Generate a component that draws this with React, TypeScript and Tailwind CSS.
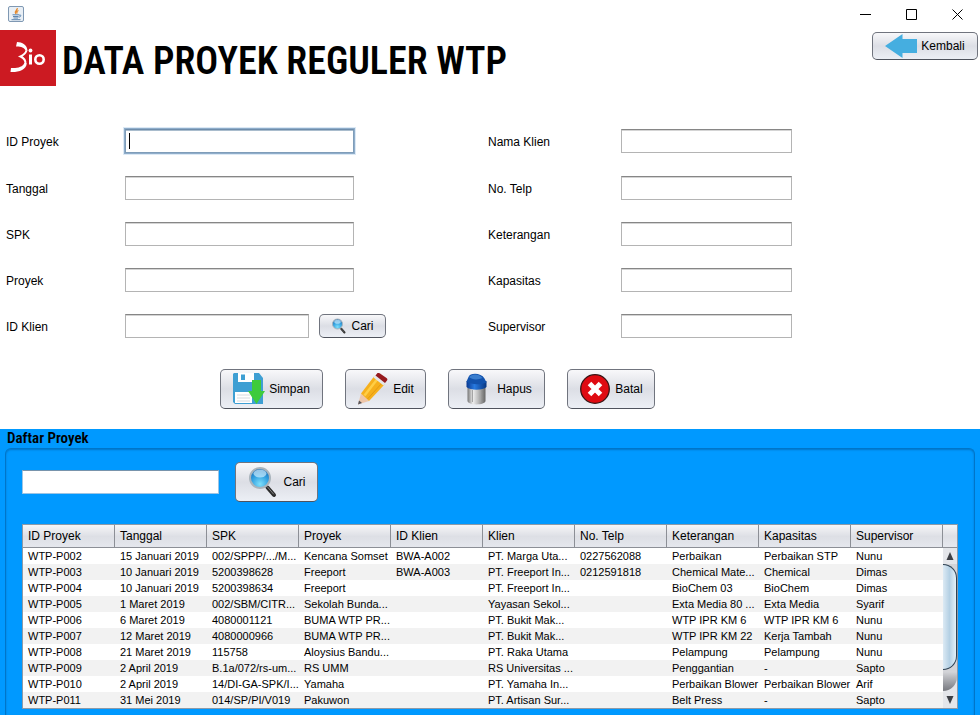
import type { ReactNode } from "react";

const buttonStyle =
  "flex shrink-0 items-center rounded-[5px] border border-[#70747e] border-b-[#4f535d] bg-linear-to-b from-[#f8f8fa] via-[#dcdee5] to-[#eceff5] text-xs text-black";

const fieldStyle =
  "h-6 border border-[#b4b4b4] border-t-[#868686] bg-white px-1 text-xs text-black outline-none shadow-[inset_0_1px_0_#d4d4d4] focus:border-[#7f9db9] focus:border-t-[#6f8dab] focus:shadow-[inset_0_1px_0_#a9bccd,0_0_0_1px_#8fadca,0_0_0_2px_#dce9f5]";

function JavaIcon() {
  return (
    <svg width="16" height="16" viewBox="0 0 16 16" fill="none" aria-hidden="true">
      <rect x=".5" y=".5" width="15" height="15" rx="1.5" fill="#e9eff5" stroke="#7f98b3" />
      <path d="M9.300 2.200C9.800 4.200 5.800 4.700 7.800 7.800M10.500 4.500C8.500 5.200 8.600 6 9.200 7.600" stroke="#e58a2e" strokeWidth="1.300" />
      <path d="M4.500 8.800H11M5 10.500H10.500M5.500 12H10M3.500 13.700H12.500" stroke="#4c79a8" strokeWidth=".9" />
      <path d="M11 9.200C13.800 8.300 13.300 11 10.600 11.200" stroke="#4c79a8" strokeWidth=".9" />
    </svg>
  );
}

function Logo() {
  return (
    <svg width="56" height="56" viewBox="0 0 56 56" className="shrink-0" role="img" aria-label="3io">
      <rect width="56" height="56" fill="#cc1a22" />
      <path d="M17 12C22 12 27.500 15 27.500 21L25.500 20.500C24.500 17.500 20.500 16.300 16 16.500Z" fill="#fff" />
      <path d="M26.500 20.500C25.500 23.500 23.500 25.200 20.500 26.500C24 28 25.800 30.500 25.500 34" stroke="#fff" strokeWidth="2" fill="none" />
      <path d="M11 38C17 38.500 23 37 24.300 33L26.700 33.500C26.500 40 18 42.500 10.500 42Z" fill="#fff" />
      <circle cx="30.500" cy="20.500" r="1.900" fill="#fff" />
      <path d="M30.500 24.500V34.500" stroke="#fff" strokeWidth="3" />
      <ellipse cx="39.500" cy="29.500" rx="4.200" ry="4.200" stroke="#fff" strokeWidth="2.600" fill="none" />
    </svg>
  );
}

function ArrowIcon() {
  return (
    <svg width="32" height="24" viewBox="0 0 32 24" aria-hidden="true">
      <path d="M0 12L17.500 0V5H32V19H17.500V24Z" fill="#45aee0" />
    </svg>
  );
}

function SearchIcon({ size }: { size: number }) {
  return (
    <svg width={size} height={size} viewBox="0 0 32 32" fill="none" aria-hidden="true">
      <defs>
        <radialGradient id={"lens" + size} cx=".5" cy=".8" r=".8">
          <stop offset="0" stopColor="#7fe0fb" />
          <stop offset=".55" stopColor="#31a0e0" />
          <stop offset="1" stopColor="#1763ac" />
        </radialGradient>
      </defs>
      <path d="M18 19L21 22" stroke="#9a9a9a" strokeWidth="3" />
      <path d="M20.500 21.500L27 29" stroke="#2c2c2c" strokeWidth="4" strokeLinecap="round" />
      <path d="M20.500 21L26.500 28" stroke="#858585" strokeWidth="1" strokeLinecap="round" />
      <circle cx="13" cy="12" r="10" fill={"url(#lens" + size + ")"} stroke="#a9b4bc" strokeWidth="2" />
      <ellipse cx="13" cy="7.500" rx="6.500" ry="4" fill="#d5f1ff" opacity=".65" />
    </svg>
  );
}

function SaveIcon() {
  return (
    <svg width="32" height="32" viewBox="0 0 32 32" aria-hidden="true">
      <path d="M1 0H26L30 5V31H2L0 29V1Z" fill="#3e9fd3" />
      <path d="M5 0H21V9H5Z" fill="#fff" />
      <path d="M8 1.500H12V7H8Z" fill="#3e9fd3" />
      <path d="M2 19H19V30H2Z" fill="#fff" />
      <path d="M4 22H17M4 25H17M4 28H17" stroke="#d5dade" />
      <path d="M19 7H28V18H32L23.500 31L15 18H19Z" fill="#3ecb3c" />
    </svg>
  );
}

function PencilIcon() {
  return (
    <svg width="32" height="32" viewBox="0 0 32 32" aria-hidden="true">
      <path d="M1 31.500L4 20.500L12 28Z" fill="#edc6aa" />
      <path d="M1 31.500L2 27.500L5 30Z" fill="#56565c" />
      <path d="M4 20.500L17 3.500L27.500 11.500L12 28Z" fill="#f6b01c" />
      <path d="M7.500 22.500L20 6.500" stroke="#ffce45" strokeWidth="2.500" />
      <path d="M10.500 26L25 10" stroke="#e39a12" />
      <path d="M16.500 4.500L18.500 2L28.500 9.500L26.500 12.500Z" fill="#e4e6e8" />
      <path d="M18.500 2.500L20.500 0Q21.500 -.5 23 .5L29.500 5Q31 6 30 7.500L28 10Z" fill="#961a1e" />
    </svg>
  );
}

function BinIcon() {
  return (
    <svg width="32" height="32" viewBox="0 0 32 32" aria-hidden="true">
      <defs>
        <linearGradient id="can">
          <stop offset="0" stopColor="#777" />
          <stop offset=".3" stopColor="#eee" />
          <stop offset=".6" stopColor="#bbb" />
          <stop offset="1" stopColor="#666" />
        </linearGradient>
        <linearGradient id="lid">
          <stop offset="0" stopColor="#0a3990" />
          <stop offset=".4" stopColor="#2779e0" />
          <stop offset="1" stopColor="#083681" />
        </linearGradient>
      </defs>
      <path d="M6.500 13H24.500V28C24 32.500 7 32.500 6.500 28Z" fill="url(#can)" />
      <path d="M11.500 17V29M19.500 17V29" stroke="#a5a5a5" />
      <path d="M5.500 8H25.500V14C22 17.500 9 17.500 5.500 14Z" fill="url(#lid)" />
      <path d="M7.500 4C9 -.5 20 -.5 23.500 5.500L25.500 9.500C20 12 10 12 5.500 8.500Z" fill="#1252ad" />
      <path d="M8 4C11 .5 18 .5 21.500 5C17 7 11 7 8 4Z" fill="#397dce" />
    </svg>
  );
}

function CancelIcon() {
  return (
    <svg width="32" height="32" viewBox="0 0 32 32" aria-hidden="true">
      <circle cx="16" cy="16" r="14.300" fill="#df0b12" stroke="#381414" strokeWidth="1.300" />
      <path d="M10.500 10.500L21.500 21.500M21.500 10.500L10.500 21.500" stroke="#fff" strokeWidth="5" />
    </svg>
  );
}

function ActionButton({ icon, width, children }: { icon: ReactNode; width: string; children: ReactNode }) {
  return (
    <button type="button" className={`${buttonStyle} h-10 justify-center gap-1 ${width}`}>
      {icon}
      {children}
    </button>
  );
}

function Field({ id, label, labelWidth, width, focused, children }: {
  id: string;
  label: string;
  labelWidth: string;
  width: string;
  focused?: boolean;
  children?: ReactNode;
}) {
  return (
    <div className="flex items-start">
      <label htmlFor={id} className={`${labelWidth} shrink-0 text-xs leading-[26px]`}>{label}</label>
      <div className="relative flex">
        <input id={id} type="text" autoFocus={focused} autoComplete="off" className={`${fieldStyle} caret-transparent ${width}`} />
        {focused && <span className="absolute top-1 left-1 h-4 w-px bg-black" />}
      </div>
      {children}
    </div>
  );
}

const formRows = "grid grid-rows-[25px_24px_24px_24px_24px] gap-y-[22px]";

const columns = ["ID Proyek", "Tanggal", "SPK", "Proyek", "ID Klien", "Klien", "No. Telp", "Keterangan", "Kapasitas", "Supervisor"];

const projects = [
  ["WTP-P002", "15 Januari 2019", "002/SPPP/.../M...", "Kencana Somset", "BWA-A002", "PT. Marga Uta...", "0227562088", "Perbaikan", "Perbaikan STP", "Nunu"],
  ["WTP-P003", "10 Januari 2019", "5200398628", "Freeport", "BWA-A003", "PT. Freeport In...", "0212591818", "Chemical Mate...", "Chemical", "Dimas"],
  ["WTP-P004", "10 Januari 2019", "5200398634", "Freeport", "", "PT. Freeport In...", "", "BioChem 03", "BioChem", "Dimas"],
  ["WTP-P005", "1 Maret 2019", "002/SBM/CITR...", "Sekolah Bunda...", "", "Yayasan Sekol...", "", "Exta Media 80 ...", "Exta Media", "Syarif"],
  ["WTP-P006", "6 Maret 2019", "4080001121", "BUMA WTP PR...", "", "PT. Bukit Mak...", "", "WTP IPR KM 6", "WTP IPR KM 6", "Nunu"],
  ["WTP-P007", "12 Maret 2019", "4080000966", "BUMA WTP PR...", "", "PT. Bukit Mak...", "", "WTP IPR KM 22", "Kerja Tambah", "Nunu"],
  ["WTP-P008", "21 Maret 2019", "115758", "Aloysius Bandu...", "", "PT. Raka Utama", "", "Pelampung", "Pelampung", "Nunu"],
  ["WTP-P009", "2 April 2019", "B.1a/072/rs-um...", "RS UMM", "", "RS Universitas ...", "", "Penggantian", "-", "Sapto"],
  ["WTP-P010", "2 April 2019", "14/DI-GA-SPK/I...", "Yamaha", "", "PT. Yamaha In...", "", "Perbaikan Blower", "Perbaikan Blower", "Arif"],
  ["WTP-P011", "31 Mei 2019", "014/SP/PI/V019", "Pakuwon", "", "PT. Artisan Sur...", "", "Belt Press", "-", "Sapto"],
];

const headerFill = "bg-linear-to-b from-[#f6f6f8] via-[#dddfe5] to-[#e6e8ee]";

function ScrollBar() {
  return (
    <div className="flex w-[14px] shrink-0 flex-col">
      <div className={`h-[23px] border-b border-[#8c8f96] ${headerFill}`} />
      <button type="button" aria-label="Gulir ke atas" className="flex h-4 items-center justify-center bg-[#e4e6ea]">
        <svg width="8" height="8" viewBox="0 0 8 8"><path d="M4 0L7.500 8H.5Z" fill="#3d4046" /></svg>
      </button>
      <div className="flex-1 bg-[#e4e6ea]">
        <div className="h-[127px] overflow-hidden rounded-br-full bg-linear-to-b from-[#d3d4d8] from-85% to-[#77797f]">
          <div className="h-[106px] rounded-r-full border border-l-0 border-[#2f4253] bg-linear-to-r from-[#dceaf4] via-[#b4d0e4] to-[#e3f1f9]" />
        </div>
      </div>
      <button type="button" aria-label="Gulir ke bawah" className="flex h-4 items-center justify-center bg-[#e4e6ea]">
        <svg width="8" height="8" viewBox="0 0 8 8"><path d="M4 8L7.500 0H.5Z" fill="#3d4046" /></svg>
      </button>
    </div>
  );
}

export default function App() {
  return (
    <div className="flex min-h-screen flex-col bg-white font-['Liberation_Sans',Arial,sans-serif] text-black">
      <div className="flex h-[30px] shrink-0 items-center justify-between pb-0.5 pl-2">
        <JavaIcon />
        <div className="flex">
          <button type="button" aria-label="Minimize" className="flex h-7 w-[46px] items-center justify-center">
            <svg width="11" height="11" viewBox="0 0 11 11"><path d="M0 5.500H11" stroke="#000" /></svg>
          </button>
          <button type="button" aria-label="Maximize" className="flex h-7 w-[46px] items-center justify-center">
            <svg width="11" height="11" viewBox="0 0 11 11"><path d="M.5 .5H10.500V10.500H.5Z" stroke="#000" fill="none" /></svg>
          </button>
          <button type="button" aria-label="Close" className="flex h-7 w-[46px] items-center justify-center">
            <svg width="11" height="11" viewBox="0 0 11 11"><path d="M.5 .5L10.500 10.500M10.500 .5L.5 10.500" stroke="#000" /></svg>
          </button>
        </div>
      </div>

      <header className="flex h-14 items-start">
        <Logo />
        <h1 className="flex-1 pl-1.5 font-['Roboto_Condensed','Liberation_Sans',sans-serif] text-[38px] leading-[62px] font-semibold whitespace-nowrap">
          DATA PROYEK REGULER WTP
        </h1>
        <button type="button" className={`${buttonStyle} mt-0.5 mr-0.5 h-7 w-[106px] justify-center gap-1`}>
          <ArrowIcon />
          Kembali
        </button>
      </header>

      <form className="pt-[43px]">
        <div className="flex pl-1.5">
          <div className={`${formRows} w-[482px] shrink-0`}>
            <Field id="id-proyek" label="ID Proyek" labelWidth="w-[119px]" width="w-[229px]" focused />
            <Field id="tanggal" label="Tanggal" labelWidth="w-[119px]" width="w-[229px]" />
            <Field id="spk" label="SPK" labelWidth="w-[119px]" width="w-[229px]" />
            <Field id="proyek" label="Proyek" labelWidth="w-[119px]" width="w-[229px]" />
            <Field id="id-klien" label="ID Klien" labelWidth="w-[119px]" width="w-[184px]">
              <button type="button" className={`${buttonStyle} ml-2.5 h-6 w-[67px] justify-center gap-1`}>
                <SearchIcon size={16} />
                Cari
              </button>
            </Field>
          </div>
          <div className={formRows}>
            <Field id="nama-klien" label="Nama Klien" labelWidth="w-[133px]" width="w-[171px]" />
            <Field id="no-telp" label="No. Telp" labelWidth="w-[133px]" width="w-[171px]" />
            <Field id="keterangan" label="Keterangan" labelWidth="w-[133px]" width="w-[171px]" />
            <Field id="kapasitas" label="Kapasitas" labelWidth="w-[133px]" width="w-[171px]" />
            <Field id="supervisor" label="Supervisor" labelWidth="w-[133px]" width="w-[171px]" />
          </div>
        </div>
        <div className="flex gap-[22px] pt-[31px] pb-5 pl-[220px]">
          <ActionButton icon={<SaveIcon />} width="w-[103px]">Simpan</ActionButton>
          <ActionButton icon={<PencilIcon />} width="w-[81px]">Edit</ActionButton>
          <ActionButton icon={<BinIcon />} width="w-[97px]">Hapus</ActionButton>
          <ActionButton icon={<CancelIcon />} width="w-[88px]">Batal</ActionButton>
        </div>
      </form>

      <section className="flex flex-1 flex-col bg-[#0099ff] px-[5px]">
        <h2 className="pl-0.5 font-['Roboto_Condensed','Liberation_Sans',sans-serif] text-[15px] leading-[19px] font-semibold">Daftar Proyek</h2>
        <div className="flex-1 rounded-t-md border-x border-t border-[#0075c8] px-4 pt-[13px] pb-1.5 shadow-[inset_0_1px_2px_#0075c8]">
          <div className="flex items-center gap-4">
            <input type="text" aria-label="Cari proyek" className="h-6 w-[197px] border border-[#9cc4e4] border-t-[#7894ac] bg-white px-1 text-xs outline-none" />
            <ActionButton icon={<SearchIcon size={32} />} width="w-[83px]">Cari</ActionButton>
          </div>
          <div className="mt-[22px] flex border border-[#8c9aa8] bg-white">
            <div className="min-w-0 flex-1">
              <table className="w-full table-fixed border-separate border-spacing-0 text-left">
                <thead>
                  <tr className={`h-[23px] ${headerFill}`}>
                    {columns.map((name) => (
                      <th key={name} scope="col" className="border-r border-b border-[#8c8f96] py-0 pl-[5px] text-xs leading-5 font-normal whitespace-nowrap">{name}</th>
                    ))}
                  </tr>
                </thead>
                <tbody>
                  {projects.map((row) => (
                    <tr key={row[0]} className="h-4 even:bg-[#f2f2f2]">
                      {row.map((cell, i) => (
                        <td key={i} className="overflow-hidden py-0 pl-[5px] text-[11px] leading-4 whitespace-nowrap">{cell}</td>
                      ))}
                    </tr>
                  ))}
                </tbody>
              </table>
            </div>
            <ScrollBar />
          </div>
        </div>
      </section>
    </div>
  );
}
